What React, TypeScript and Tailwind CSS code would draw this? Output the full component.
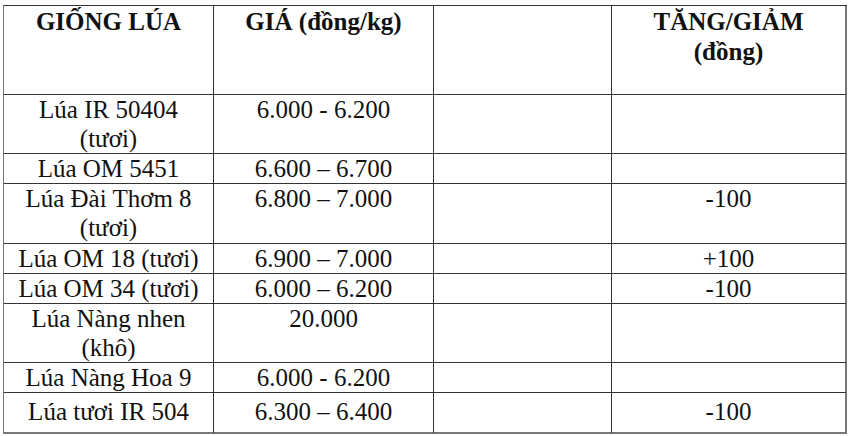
const rows = [
  { name: ['Lúa IR 50404', '(tươi)'], price: '6.000 - 6.200', change: '', h: 'h-[59px]' },
  { name: ['Lúa OM 5451'], price: '6.600 – 6.700', change: '', h: 'h-[30px]' },
  { name: ['Lúa Đài Thơm 8', '(tươi)'], price: '6.800 – 7.000', change: '-100', h: 'h-[60px]' },
  { name: ['Lúa OM 18 (tươi)'], price: '6.900 – 7.000', change: '+100', h: 'h-[30px]' },
  { name: ['Lúa OM 34 (tươi)'], price: '6.000 – 6.200', change: '-100', h: 'h-[30px]' },
  { name: ['Lúa Nàng nhen', '(khô)'], price: '20.000', change: '', h: 'h-[59px]' },
  { name: ['Lúa Nàng Hoa 9'], price: '6.000 - 6.200', change: '', h: 'h-[30px]' },
  { name: ['Lúa tươi IR 504'], price: '6.300 – 6.400', change: '-100', h: 'h-[41px]' },
]

const cell = 'border-r border-b border-[#333] text-center'

export default function App() {
  return (
    <div className="w-[850px] h-[436px] bg-white text-[#111] text-[25px] leading-[29px] pt-[5px] pl-[3px] font-['Liberation_Serif','Times_New_Roman',serif]">
      <div className="grid grid-cols-[210px_220px_178px_235px] border-l border-t border-l-[#777] border-t-[#333] w-[844px]">
        {/* header */}
        <div className={`${cell} h-[89px] font-bold pt-[1px]`}>GIỐNG LÚA</div>
        <div className={`${cell} h-[89px] font-bold pt-[1px]`}>GIÁ (đồng/kg)</div>
        <div className={`${cell} h-[89px]`}></div>
        <div className={`border-r-2 border-r-[#777] border-b border-b-[#333] text-center h-[89px] font-bold pt-[1px] leading-[30px]`}>
          <div>TĂNG/GIẢM</div>
          <div>(đồng)</div>
        </div>

        {rows.map((r, i) => {
          const last = i === rows.length - 1
          const base = last ? 'border-r border-b-2 border-r-[#333] border-b-[#777] text-center pt-[4px]' : cell
          const edge = last
            ? 'border-r-2 border-b-2 border-[#777] text-center pt-[4px]'
            : 'border-r-2 border-b border-r-[#777] border-b-[#333] text-center'
          return (
            <div key={i} className="contents">
              <div className={`${base} ${r.h}`}>
                {r.name.map((n, j) => (
                  <div key={j}>{n}</div>
                ))}
              </div>
              <div className={`${base} ${r.h}`}>{r.price}</div>
              <div className={`${base} ${r.h}`}></div>
              <div className={`${edge} ${r.h}`}>{r.change}</div>
            </div>
          )
        })}
      </div>
    </div>
  )
}
